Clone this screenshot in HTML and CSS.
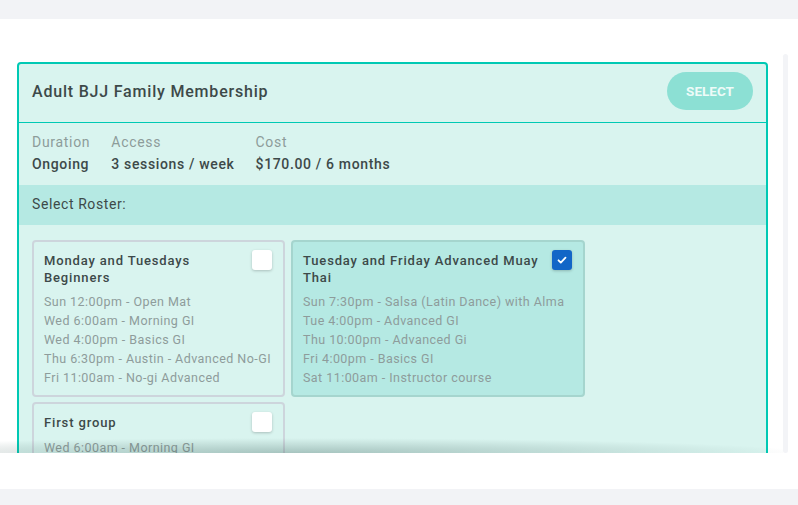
FILE: index.html
```html
<!DOCTYPE html>
<html lang="en">
<head>
    <title>Membership</title>
    <meta charset="utf-8">
    <link rel="stylesheet" href="styles.css">
</head>
<body>
    <div class="panel">
        <div class="scroll-wrap">
            <div class="scroll-content">
                <div class="membership">
                    <div class="membership-head">
                        <div class="membership-title">Adult BJJ Family Membership</div>
                        <button class="btn-select">SELECT</button>
                    </div>
                    <div class="details">
                        <div class="detail">
                            <div class="detail-label">Duration</div>
                            <div class="detail-value">Ongoing</div>
                        </div>
                        <div class="detail">
                            <div class="detail-label">Access</div>
                            <div class="detail-value">3 sessions / week</div>
                        </div>
                        <div class="detail">
                            <div class="detail-label">Cost</div>
                            <div class="detail-value">$170.00 / 6 months</div>
                        </div>
                    </div>
                    <div class="roster-bar">Select Roster:</div>
                    <div class="rosters">
                        <div class="roster">
                            <div class="roster-head">
                                <div class="roster-title">Monday and Tuesdays Beginners</div>
                                <span class="check"></span>
                            </div>
                            <ul class="sessions">
                                <li>Sun 12:00pm - Open Mat</li>
                                <li>Wed 6:00am - Morning GI</li>
                                <li>Wed 4:00pm - Basics GI</li>
                                <li>Thu 6:30pm - Austin - Advanced No-GI</li>
                                <li>Fri 11:00am - No-gi Advanced</li>
                            </ul>
                        </div>
                        <div class="roster selected">
                            <div class="roster-head">
                                <div class="roster-title">Tuesday and Friday Advanced Muay Thai</div>
                                <span class="check checked">
                                    <svg width="12" height="12" viewBox="0 0 12 12"><path d="M2.5 6.3l2.3 2.3 4.7-4.9" fill="none" stroke="#fff" stroke-width="1.8" stroke-linecap="round" stroke-linejoin="round"/></svg>
                                </span>
                            </div>
                            <ul class="sessions">
                                <li>Sun 7:30pm - Salsa (Latin Dance) with Alma</li>
                                <li>Tue 4:00pm - Advanced GI</li>
                                <li>Thu 10:00pm - Advanced Gi</li>
                                <li>Fri 4:00pm - Basics GI</li>
                                <li>Sat 11:00am - Instructor course</li>
                            </ul>
                        </div>
                        <div class="roster">
                            <div class="roster-head">
                                <div class="roster-title">First group</div>
                                <span class="check"></span>
                            </div>
                            <ul class="sessions">
                                <li>Wed 6:00am - Morning GI</li>
                            </ul>
                        </div>
                    </div>
                </div>
            </div>
            <div class="scroll-track"></div>
        </div>
    </div>
</body>
</html>
```

FILE: styles.css
```css
/* membership picker */
body {
    margin: 0;
    background: #f2f3f6;
    font-family: Roboto, "Liberation Sans", Arial, sans-serif;
    color: #3d4949;
}
.panel {
    margin-top: 19px;
    height: 435px;
    padding-top: 35px;
    background: #fff;
}
.scroll-wrap {
    position: relative;
    display: flex;
    height: 399px;
}
.scroll-wrap::after {
    content: "";
    position: absolute;
    left: 0;
    right: 15px;
    bottom: 0;
    height: 15px;
    background: radial-gradient(ellipse 65% 100% at 38% 100%, rgba(60, 95, 90, 0.32), rgba(60, 95, 90, 0) 100%);
}
.scroll-content {
    width: 766px;
    padding: 8px 0 0 17px;
    overflow: hidden;
}
.scroll-track {
    width: 5px;
    background: #f3f4f7;
    border-radius: 3px;
}
.membership {
    width: 747px;
    border: 2px solid #00c9b4;
    border-radius: 4px;
    background: #d9f4ef;
}
.membership-head {
    display: flex;
    align-items: center;
    justify-content: space-between;
    height: 54px;
    padding: 0 13px 4px;
    border-bottom: 1px solid #00c9b4;
}
.membership-title {
    font-size: 16px;
    font-weight: 500;
    letter-spacing: 0.8px;
}
.btn-select {
    width: 86px;
    height: 38px;
    border: none;
    border-radius: 19px;
    background: #8ce0d4;
    color: #eefbf8;
    font-family: Roboto, "Liberation Sans", Arial, sans-serif;
    font-size: 13.5px;
    font-weight: 700;
}
.details {
    display: flex;
    gap: 21px;
    padding: 9px 13px 0;
    height: 53px;
}
.detail-label {
    font-size: 14px;
    color: #8d9c9a;
    letter-spacing: 0.7px;
    line-height: 20px;
}
.detail-value {
    font-size: 14px;
    font-weight: 500;
    letter-spacing: 0.65px;
    line-height: 20px;
    margin-top: 2px;
}
.roster-bar {
    height: 40px;
    line-height: 39px;
    padding: 0 13px;
    background: #b5e9e3;
    font-size: 14px;
    letter-spacing: 0.6px;
}
.rosters {
    display: grid;
    grid-template-columns: 253px 294px;
    column-gap: 6px;
    row-gap: 5px;
    align-items: start;
    padding: 15px 13px 20px;
}
.roster {
    border: 2px solid #cdd5dc;
    border-radius: 4px;
    padding: 8px 11px 8px 10px;
}
.roster.selected {
    background: #b5e9e3;
    border-color: #a5d5ce;
}
.roster-head {
    display: flex;
    justify-content: space-between;
    align-items: flex-start;
}
.roster-title {
    padding-top: 2px;
    font-size: 13px;
    font-weight: 500;
    line-height: 17px;
    letter-spacing: 0.85px;
    max-width: 200px;
}
.selected .roster-title {
    max-width: 245px;
}
.check {
    display: flex;
    align-items: center;
    justify-content: center;
    flex-shrink: 0;
    width: 20px;
    height: 20px;
    border-radius: 3px;
    background: #fff;
    box-shadow: 0 1px 3px rgba(0, 0, 0, 0.22);
}
.check.checked {
    background: #1266c7;
}
.sessions {
    list-style: none;
    margin: 6px 0 0;
    padding: 0;
    font-size: 12.5px;
    line-height: 19px;
    letter-spacing: 0.45px;
    white-space: nowrap;
    color: #8e9c9b;
}
```
